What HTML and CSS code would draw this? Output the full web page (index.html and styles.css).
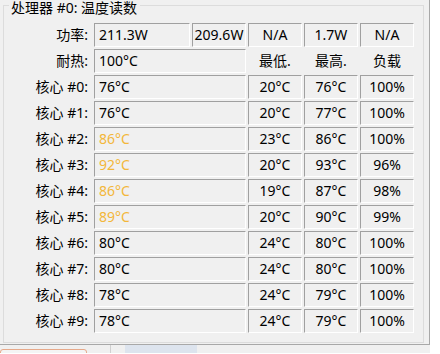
FILE: index.html
```html
<!DOCTYPE html>
<html lang="zh-CN">
<head>
<meta charset="utf-8">
<title>处理器 #0: 温度读数</title>
<link rel="stylesheet" href="styles.css">
</head>
<body>
<div class="panel">
  <div class="group">
    <div class="group-title">处理器 #0: 温度读数</div>
    <div class="grid">
      <div class="label">功率:</div>
      <div class="box left">211.3W</div>
      <div class="box">209.6W</div>
      <div class="box">N/A</div>
      <div class="box">1.7W</div>
      <div class="box">N/A</div>

      <div class="label">耐热:</div>
      <div class="box left wide">100°C</div>
      <div class="head">最低.</div>
      <div class="head">最高.</div>
      <div class="head">负载</div>

      <div class="label">核心 #0:</div>
      <div class="box left wide">76°C</div>
      <div class="box">20°C</div><div class="box">76°C</div><div class="box">100%</div>

      <div class="label">核心 #1:</div>
      <div class="box left wide">76°C</div>
      <div class="box">20°C</div><div class="box">77°C</div><div class="box">100%</div>

      <div class="label">核心 #2:</div>
      <div class="box left wide hot">86°C</div>
      <div class="box">23°C</div><div class="box">86°C</div><div class="box">100%</div>

      <div class="label">核心 #3:</div>
      <div class="box left wide hot">92°C</div>
      <div class="box">20°C</div><div class="box">93°C</div><div class="box">96%</div>

      <div class="label">核心 #4:</div>
      <div class="box left wide hot">86°C</div>
      <div class="box">19°C</div><div class="box">87°C</div><div class="box">98%</div>

      <div class="label">核心 #5:</div>
      <div class="box left wide hot">89°C</div>
      <div class="box">20°C</div><div class="box">90°C</div><div class="box">99%</div>

      <div class="label">核心 #6:</div>
      <div class="box left wide">80°C</div>
      <div class="box">24°C</div><div class="box">80°C</div><div class="box">100%</div>

      <div class="label">核心 #7:</div>
      <div class="box left wide">80°C</div>
      <div class="box">24°C</div><div class="box">80°C</div><div class="box">100%</div>

      <div class="label">核心 #8:</div>
      <div class="box left wide">78°C</div>
      <div class="box">24°C</div><div class="box">79°C</div><div class="box">100%</div>

      <div class="label">核心 #9:</div>
      <div class="box left wide">78°C</div>
      <div class="box">24°C</div><div class="box">79°C</div><div class="box">100%</div>
    </div>
  </div>
</div>
<div class="strip">
  <div class="strip-btn"></div>
  <div class="strip-sep"></div>
  <div class="strip-sel"></div>
</div>
</body>
</html>
```

FILE: styles.css
```css
html, body {
  margin: 0;
  padding: 0;
  background: #ffffff;
}

body {
  font-family: "Noto Sans", "Noto Sans CJK SC", sans-serif;
  font-size: 14px;
  color: #000;
  width: 440px;
  height: 354px;
  overflow: hidden;
}

.panel {
  width: 429px;
  background: #f0f0f0;
  border-right: 1px solid #a8a8a8;
  border-bottom: 1px solid #a8a8a8;
  padding-top: 5px;
  padding-bottom: 1px;
}

.group {
  margin: 0 5px 0 3px;
  border: 1px solid #dcdcdc;
  padding-bottom: 9px;
}

.group-title {
  width: fit-content;
  margin: -5px 0 0 5px;
  padding: 0 3px 0 2px;
  background: #f0f0f0;
  line-height: 14px;
  height: 14px;
  white-space: nowrap;
}

.grid {
  margin-top: 8px;
  display: grid;
  grid-template-columns: 88px 96px 54px 54px 54px 54px;
  grid-auto-rows: 24px;
  column-gap: 2px;
  row-gap: 2px;
}

.label {
  text-align: right;
  padding-right: 4px;
  line-height: 24px;
  white-space: nowrap;
}

.box {
  box-sizing: border-box;
  border-top: 1px solid #a0a0a0;
  border-left: 1px solid #a0a0a0;
  border-bottom: 1px solid #ffffff;
  border-right: 1px solid #ffffff;
  line-height: 22px;
  text-align: center;
  white-space: nowrap;
}

.box.left {
  text-align: left;
  padding-left: 4px;
}

.box.wide {
  grid-column: span 2;
}

.head {
  line-height: 24px;
  text-align: center;
  white-space: nowrap;
}

.hot {
  color: #f3b73a;
}

.strip {
  width: 430px;
  height: 8px;
  background: #f0f0f0;
  display: flex;
  align-items: flex-start;
  overflow: hidden;
}

.strip-btn {
  width: 87px;
  height: 12px;
  margin-top: 4px;
  box-sizing: border-box;
  border: 1px solid #e6a98a;
  border-radius: 3px;
  background: #f4f4f4;
}

.strip-sep {
  margin-left: 23px;
  width: 1px;
  height: 8px;
  background: #d0d0d0;
}

.strip-sel {
  margin-left: 14px;
  width: 72px;
  height: 8px;
  background: #dde4ee;
}
```
